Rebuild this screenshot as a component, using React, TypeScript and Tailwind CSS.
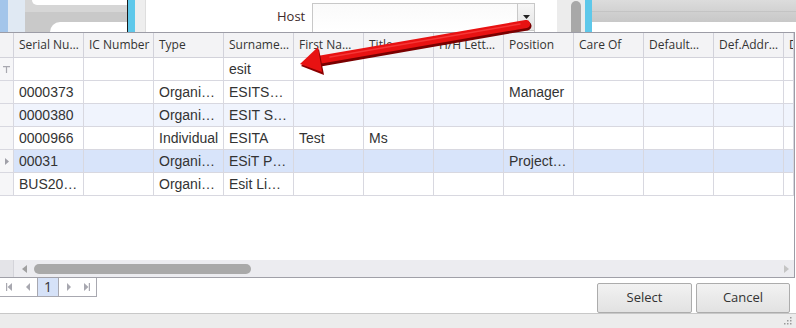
import React from "react";

const cols = [
  "Serial Nu…",
  "IC Number",
  "Type",
  "Surname…",
  "First Na…",
  "Title",
  "H/H Lett…",
  "Position",
  "Care Of",
  "Default…",
  "Def.Addr…",
  "D",
];

type Row = { cells: string[]; bg: string; sel?: boolean };

const rows: Row[] = [
  { cells: ["0000373", "", "Organi…", "ESITS…", "", "", "", "Manager", "", "", "", ""], bg: "bg-white" },
  { cells: ["0000380", "", "Organi…", "ESIT S…", "", "", "", "", "", "", "", ""], bg: "bg-[#f0f4fd]" },
  { cells: ["0000966", "", "Individual", "ESITA", "Test", "Ms", "", "", "", "", "", ""], bg: "bg-white" },
  { cells: ["00031", "", "Organi…", "ESiT P…", "", "", "", "Project…", "", "", "", ""], bg: "bg-[#d8e4fa]", sel: true },
  { cells: ["BUS20…", "", "Organi…", "Esit Li…", "", "", "", "", "", "", "", ""], bg: "bg-white" },
];

function colWidth(i: number) {
  return i === 11 ? "w-[10px]" : "w-[70px]";
}

export default function App() {
  return (
    <div className="relative w-[796px] h-[328px] overflow-hidden bg-white flex flex-col" style={{ fontFamily: '"Open Sans", sans-serif' }}>
      {/* top strip */}
      <div className="h-[32px] flex shrink-0">
        <div className="w-[8px] bg-[#a3c5ea]" />
        <div className="w-[17px] bg-[#e0e9f3]" />
        <div className="w-[102px] bg-[#c9c9c9] flex flex-col">
          <div className="h-[12px] bg-[#d6d6d6] flex flex-col">
            <div className="ml-[7px] h-[5px] bg-white rounded-bl-[8px]" />
          </div>
          <div className="mt-auto ml-[25px] h-[10px] bg-white rounded-tl-[10px]" />
        </div>
        <div className="w-[1px] bg-[#1a1a1a]" />
        <div className="w-[7px] bg-[#5ec8ea]" />
        <div className="w-[11px] bg-[#eeeeee] border-r border-[#dedede]" />
        <div className="w-[411px] bg-white flex items-start">
          <span className="ml-[131px] mt-[7px] text-[13px] leading-[18px] text-[#3e2a2a]">Host</span>
          <div className="ml-[7px] mt-[3px] w-[223px] h-[29px] border border-b-0 border-[#c8c8c8] bg-gradient-to-b from-[#fafafa] to-white flex justify-end">
            <div className="w-[17px] h-[27px] bg-gradient-to-b from-[#f6f6f6] to-[#e4e4e4] border-l border-b border-[#c8c8c8] flex items-center justify-center">
              <svg width="7" height="4" viewBox="0 0 7 4"><path d="M0 0h7L3.5 4z" fill="#222" /></svg>
            </div>
          </div>
        </div>
        <div className="w-[14px] bg-[#ececec]" />
        <div className="w-[10px] bg-[#ececec] flex">
          <div className="w-full mt-[1px] bg-[#a8a8a8] rounded-t-[5px]" />
        </div>
        <div className="w-[4px] bg-[#ececec]" />
        <div className="w-[7px] bg-[#5ec8ea]" />
        <div className="flex-1 flex flex-col">
          <div className="h-[12px] bg-gradient-to-b from-[#dcdcdc] to-[#d2d2d2] border-b border-[#c4c4c4]" />
          <div className="h-[10px] bg-gradient-to-b from-[#d0d0d0] to-[#c8c8c8]" />
          <div className="flex-1 bg-white" />
        </div>
      </div>

      {/* grid */}
      <div className="w-[795px] border-t border-r border-[#9c9ca6] flex flex-col shrink-0">
        {/* header */}
        <div className="h-[25px] flex bg-[#f3f3f5] border-b border-[#d2d2da]">
          <div className="w-[14px] border-r border-[#d2d2da]" />
          {cols.map((c, i) => (
            <div key={i} className={`${colWidth(i)} shrink-0 border-r border-[#d2d2da] pl-[5px] flex items-center overflow-hidden whitespace-nowrap text-[12px] text-[#333]`}>
              {c}
            </div>
          ))}
        </div>
        {/* filter row */}
        <div className="h-[23px] flex bg-white border-b border-[#d8d8e0]" style={{ fontFamily: '"Liberation Sans", Arial, sans-serif' }}>
          <div className="w-[14px] bg-[#f6f6f8] border-r border-[#d8d8e0] flex items-center justify-center">
            <svg width="7" height="7" viewBox="0 0 7 7"><path d="M0 0h7v1.2H4.1V7H2.9V1.2H0z" fill="#a8a8b0" /></svg>
          </div>
          {cols.map((_, i) => (
            <div key={i} className={`${colWidth(i)} shrink-0 border-r border-[#d8d8e0] pl-[5px] flex items-center text-[14px] text-[#333]`}>
              {i === 3 ? "esit" : ""}
            </div>
          ))}
        </div>
        {rows.map((r, ri) => (
          <div key={ri} className={`h-[23px] flex ${r.bg} border-b border-[#d8d8e0]`} style={{ fontFamily: '"Liberation Sans", Arial, sans-serif' }}>
            <div className="w-[14px] bg-[#f6f6f8] border-r border-[#d8d8e0] flex items-center justify-center">
              {r.sel && (
                <svg width="4" height="7" viewBox="0 0 4 7"><path d="M0 0l4 3.5L0 7z" fill="#a0a0a8" /></svg>
              )}
            </div>
            {r.cells.map((c, i) => (
              <div key={i} className={`${colWidth(i)} shrink-0 border-r border-[#d8d8e0] pl-[5px] flex items-center overflow-hidden whitespace-nowrap text-[14px] text-[#333]`}>
                {c}
              </div>
            ))}
          </div>
        ))}
        <div className="h-[64px] bg-white" />
        {/* horizontal scrollbar */}
        <div className="h-[17px] flex bg-[#ececf0] border-b border-[#a0a0a8] box-content">
          <div className="w-[14px] bg-[#e4e4e8] border-r border-[#d4d4da]" />
          <div className="w-[20px] flex items-center justify-center">
            <svg width="5" height="8" viewBox="0 0 5 8"><path d="M5 0v8L0 4z" fill="#a0a0a0" /></svg>
          </div>
          <div className="flex items-center">
            <div className="w-[217px] h-[10px] rounded-full bg-[#a9a9a9]" />
          </div>
          <div className="flex-1" />
          <div className="w-[16px] flex items-center justify-center">
            <svg width="5" height="8" viewBox="0 0 5 8"><path d="M0 0v8l5-4z" fill="#c4c4c4" /></svg>
          </div>
        </div>
      </div>

      {/* footer */}
      <div className="h-[35px] flex items-start shrink-0">
        <div className="w-[97px] h-[19px] border border-t-0 border-l-0 border-[#a8a8b0] flex">
          <div className="w-[18px] flex items-center justify-center">
            <svg width="6" height="8" viewBox="0 0 6 8"><path d="M0 0h1.2v8H0zM6 0v8L1.6 4z" fill="#a8a8b0" /></svg>
          </div>
          <div className="w-[19px] flex items-center justify-center">
            <svg width="4" height="8" viewBox="0 0 4 8"><path d="M4 0v8L0 4z" fill="#a8a8b0" /></svg>
          </div>
          <div className="w-[22px] bg-[#d6e2f8] border-l border-r border-[#a8a8b0] flex items-center justify-center text-[14px] text-[#333] leading-none">1</div>
          <div className="w-[19px] flex items-center justify-center">
            <svg width="4" height="8" viewBox="0 0 4 8"><path d="M0 0v8l4-4z" fill="#a8a8b0" /></svg>
          </div>
          <div className="w-[18px] flex items-center justify-center">
            <svg width="6" height="8" viewBox="0 0 6 8"><path d="M0 0v8l4.4-4zM4.8 0H6v8H4.8z" fill="#a8a8b0" /></svg>
          </div>
        </div>
        <div className="flex-1" />
        <div className="mt-[5px] flex gap-[4px] mr-[6px]">
          <button className="w-[95px] h-[30px] rounded-[2px] border border-[#acacac] bg-gradient-to-b from-[#f2f2f2] to-[#e2e2e2] text-[13px] text-[#333]">Select</button>
          <button className="w-[94px] h-[30px] rounded-[2px] border border-[#acacac] bg-gradient-to-b from-[#f2f2f2] to-[#e2e2e2] text-[13px] text-[#333]">Cancel</button>
        </div>
      </div>

      {/* status bar */}
      <div className="flex-1 bg-[#ececec] border-t border-[#c8c8c8] flex justify-end items-end">
        <svg width="10" height="10" viewBox="0 0 10 10" className="mb-[2px] mr-[3px]">
          <rect x="7" y="1" width="1.5" height="1.5" fill="#9a9a9a" />
          <rect x="4" y="4" width="1.5" height="1.5" fill="#9a9a9a" />
          <rect x="7" y="4" width="1.5" height="1.5" fill="#9a9a9a" />
          <rect x="1" y="7" width="1.5" height="1.5" fill="#9a9a9a" />
          <rect x="4" y="7" width="1.5" height="1.5" fill="#9a9a9a" />
          <rect x="7" y="7" width="1.5" height="1.5" fill="#9a9a9a" />
        </svg>
      </div>

      {/* red arrow overlay */}
      <svg className="absolute left-0 top-0 pointer-events-none" width="796" height="328" viewBox="0 0 796 328">
        <line x1="320" y1="62" x2="527" y2="26" stroke="#7a0000" strokeWidth="9" strokeLinecap="round" />
        <line x1="318" y1="60" x2="526" y2="24" stroke="#e81212" strokeWidth="8" strokeLinecap="round" />
        <path d="M300 65 L318 48 L323 74 Z" fill="#8a0000" transform="translate(1 1)" />
        <path d="M300 64 L318 47 L322 72 Z" fill="#e81212" />
        <line x1="330" y1="57" x2="520" y2="24" stroke="#ff5050" strokeWidth="1.5" strokeLinecap="round" opacity="0.6" />
      </svg>
    </div>
  );
}
